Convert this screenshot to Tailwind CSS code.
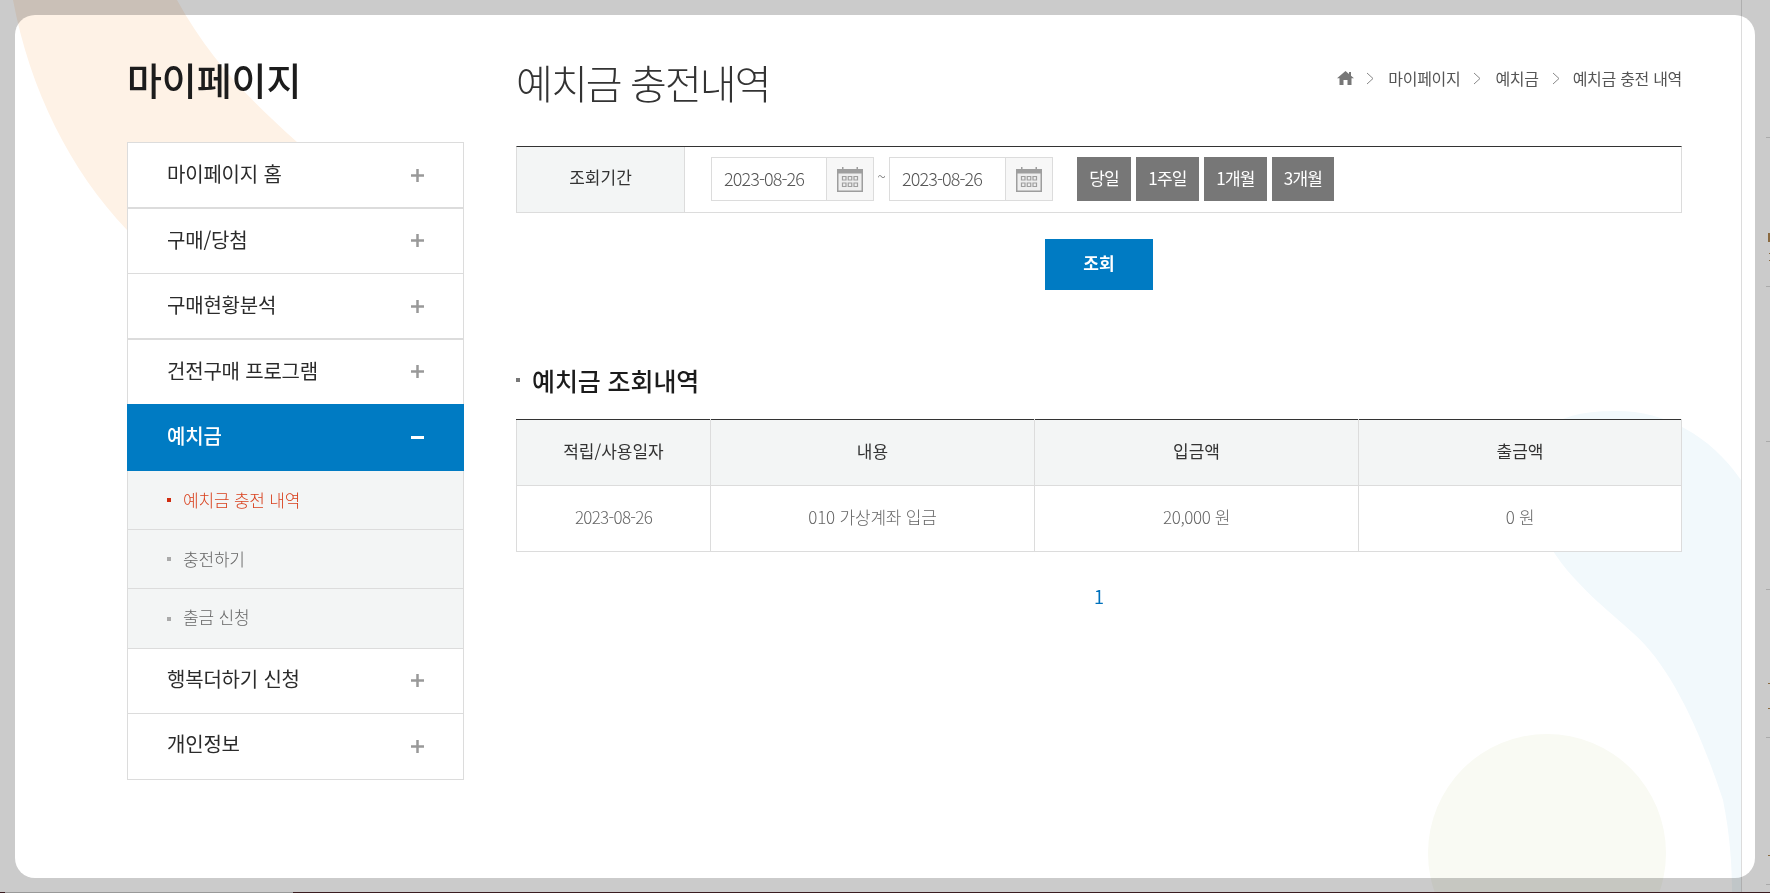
<!DOCTYPE html>
<html lang="ko">
<head>
  <meta charset="UTF-8">
  <title>예치금 충전내역</title>
  <script src="https://cdn.jsdelivr.net/npm/@tailwindcss/browser@4"></script>
</head>
<body class="bg-[#cbcbcb] h-[893px] overflow-hidden relative font-['Noto_Sans_CJK_KR','Noto_Sans',sans-serif]">
  <div class="absolute left-[15px] top-[15px] w-[1740px] h-[863px] bg-white rounded-[20px]"></div>

  <!-- background shapes -->
  <svg class="absolute left-0 top-0 mix-blend-multiply pointer-events-none" width="1770" height="893" viewBox="0 0 1770 893">
    <path d="M13 0 C30 90 70 170 127 230 L140 250 L320 160 L297 142 C250 100 210 60 177 0 Z" fill="#fef2e6"/>
    <path d="M1553 551 C1575 585 1610 612 1633 633 C1670 665 1700 730 1723 800 C1730 835 1732 865 1732 893 L1741 893 L1741 480 C1710 435 1665 411 1617 411 C1590 411 1575 414 1560 420 Z" fill="#f2f9fc"/>
    <circle cx="1547" cy="853" r="119" fill="#f9faf3"/>
    <path d="M1741 0h1v893h-1z" fill="#dcdcdc"/>
  </svg>
  <!-- bits of the page behind the overlay -->
  <svg class="absolute left-0 top-0 pointer-events-none" width="1770" height="893" viewBox="0 0 1770 893">
    <path d="M1766 137h4v1h-4zM1766 286h4v1h-4zM1766 441h4v1h-4zM1766 589h4v1h-4zM1766 737h4v1h-4zM1766 884h4v1h-4z" fill="#aaa"/>
    <path d="M1768 233h2v9h-2zM1769 253h1v1h-1zM1769 260h1v1h-1zM1768 683h2v1h-2zM1768 708h2v1h-2zM1768 855h2v1h-2z" fill="#8a6a40"/>
    <path d="M0 892h5v1H0zM293 892h1477v1H293z" fill="#3a1c20"/>
    <path d="M5 892h288v1H5z" fill="#999"/>
  </svg>

  <div class="absolute left-[127px] top-0 w-[1555px] flex gap-[52px]">
    <!-- side menu -->
    <aside class="w-[337px] pt-[51px]">
      <h2 class="text-[38px] leading-[56px] font-medium text-[#1c1c1c] tracking-[-0.1px]">마이페이지</h2>
      <ul class="mt-[35px] border border-[#dcdcdc] bg-white text-[20px] text-[#2b2b2b] tracking-[-0.2px]">
        <li class="h-[66px] flex items-center justify-between pl-[39px] pr-[39px] border-b-2 border-[#dcdcdc]"><span class="-mt-[2px]">마이페이지 홈</span><svg width="13" height="13" viewBox="0 0 13 13" fill="#999"><path d="M5.250 0h2.500v13h-2.500zM0 5.250h13v2.500H0z"/></svg></li>
        <li class="h-[65px] flex items-center justify-between pl-[39px] pr-[39px] border-b border-[#dcdcdc]"><span class="-mt-[3px]">구매/당첨</span><svg class="-mt-[1px]" width="13" height="13" viewBox="0 0 13 13" fill="#999"><path d="M5.250 0h2.500v13h-2.500zM0 5.250h13v2.500H0z"/></svg></li>
        <li class="h-[66px] flex items-center justify-between pl-[39px] pr-[39px] border-b-2 border-[#dcdcdc]"><span class="-mt-[2px]">구매현황분석</span><svg width="13" height="13" viewBox="0 0 13 13" fill="#999"><path d="M5.250 0h2.500v13h-2.500zM0 5.250h13v2.500H0z"/></svg></li>
        <li class="h-[64px] flex items-center justify-between pl-[39px] pr-[39px]"><span class="-mt-[3px]">건전구매 프로그램</span><svg class="-mt-[1px]" width="13" height="13" viewBox="0 0 13 13" fill="#999"><path d="M5.250 0h2.500v13h-2.500zM0 5.250h13v2.500H0z"/></svg></li>
        <li class="h-[67px] -mx-px flex items-center justify-between pl-[40px] pr-[40px] bg-[#007bc3] text-white font-medium"><span class="-mt-[3px]">예치금</span><span class="block w-[13px] h-[3px] bg-white"></span></li>
        <li class="h-[59px] flex items-center gap-[12px] pl-[39px] bg-[#f3f5f5] border-b border-[#dcdcdc] text-[17px] font-light text-[#d9411e]"><span class="w-1 h-1 bg-[#d02c10]"></span><span class="-mt-[1px]">예치금 충전 내역</span></li>
        <li class="h-[59px] flex items-center gap-[12px] pl-[39px] bg-[#f3f5f5] border-b border-[#dcdcdc] text-[17px] font-light text-[#666]"><span class="w-1 h-1 bg-[#aaa]"></span><span class="-mt-[1px]">충전하기</span></li>
        <li class="h-[60px] flex items-center gap-[12px] pl-[39px] bg-[#f3f5f5] border-b border-[#dcdcdc] text-[17px] font-light text-[#666]"><span class="w-1 h-1 bg-[#aaa]"></span><span class="-mt-[3px]">출금 신청</span></li>
        <li class="h-[65px] flex items-center justify-between pl-[39px] pr-[39px] border-b border-[#dcdcdc]"><span class="-mt-[4px]">행복더하기 신청</span><svg class="-mt-[1px]" width="13" height="13" viewBox="0 0 13 13" fill="#999"><path d="M5.250 0h2.500v13h-2.500zM0 5.250h13v2.500H0z"/></svg></li>
        <li class="h-[65px] flex items-center justify-between pl-[39px] pr-[39px]"><span class="-mt-[5px]">개인정보</span><svg width="13" height="13" viewBox="0 0 13 13" fill="#999"><path d="M5.250 0h2.500v13h-2.500zM0 5.250h13v2.500H0z"/></svg></li>
      </ul>
    </aside>

    <!-- content -->
    <main class="w-[1166px] pt-[53px]">
      <div class="flex items-start justify-between h-[93px]">
        <h1 class="text-[40px] leading-[58px] font-light text-[#333] tracking-[-1.9px]">예치금 충전내역</h1>
        <div class="flex items-center text-[16px] text-[#555] tracking-[-0.3px] mt-[13px]">
          <svg width="17" height="14" viewBox="0 0 17 14" fill="#777"><path d="M8.500 0 L12 3 V1 H14 V4.700 L17 7.300 H14.500 V14 H10.500 V9 H6.500 V14 H2.500 V7.300 H0 Z"/></svg>
          <svg class="ml-[12px] mr-[14px]" width="8" height="13" viewBox="0 0 8 13" fill="none" stroke="#888"><path d="M1 1l6 5.500L1 12"/></svg>
          <span>마이페이지</span>
          <svg class="ml-[13px] mr-[14px]" width="8" height="13" viewBox="0 0 8 13" fill="none" stroke="#888"><path d="M1 1l6 5.500L1 12"/></svg>
          <span>예치금</span>
          <svg class="ml-[13px] mr-[13px]" width="8" height="13" viewBox="0 0 8 13" fill="none" stroke="#888"><path d="M1 1l6 5.500L1 12"/></svg>
          <span>예치금 충전 내역</span>
        </div>
      </div>

      <div class="h-[67px] flex border border-[#dcdcdc] border-t-[#333] bg-white">
        <div class="w-[168px] bg-[#f3f5f5] border-r border-[#dcdcdc] flex items-center justify-center text-[17px] text-[#333] pb-[5px]">조회기간</div>
        <div class="flex items-start pt-[10px] pl-[26px]">
          <div class="flex h-[44px] w-[163px] border border-[#dcdcdc] bg-white">
            <span class="flex-1 pl-[12px] text-[18px] leading-[40px] font-light text-[#555] tracking-[-0.9px]">2023-08-26</span>
            <span class="w-[47px] border-l border-[#dcdcdc] bg-[#f7f7f7] flex items-center justify-center">
              <svg width="26" height="25" viewBox="0 0 26 25"><path d="M5 0h1.500v3H5zM19.500 0H21v3h-1.500z" fill="#9e9e9e"/><rect x="0.750" y="2.750" width="24.500" height="21.500" fill="#eee" stroke="#9e9e9e" stroke-width="1.500"/><path d="M0 2h26v4.500H0z" fill="#9e9e9e"/><path d="M5.500 9.500h3.500v3.500H5.500zM11.250 9.500h3.500v3.500h-3.500zM17 9.500h3.500v3.500H17zM5.500 16h3.500v3.500H5.500zM11.250 16h3.500v3.500h-3.500zM17 16h3.500v3.500H17z" fill="none" stroke="#9e9e9e" stroke-width="1.200"/></svg>
            </span>
          </div>
          <span class="w-[15px] text-center text-[16px] font-light leading-[38px] text-[#777]">~</span>
          <div class="flex h-[44px] w-[164px] border border-[#dcdcdc] bg-white">
            <span class="flex-1 pl-[12px] text-[18px] leading-[40px] font-light text-[#555] tracking-[-0.9px]">2023-08-26</span>
            <span class="w-[47px] border-l border-[#dcdcdc] bg-[#f7f7f7] flex items-center justify-center">
              <svg width="26" height="25" viewBox="0 0 26 25"><path d="M5 0h1.500v3H5zM19.500 0H21v3h-1.500z" fill="#9e9e9e"/><rect x="0.750" y="2.750" width="24.500" height="21.500" fill="#eee" stroke="#9e9e9e" stroke-width="1.500"/><path d="M0 2h26v4.500H0z" fill="#9e9e9e"/><path d="M5.500 9.500h3.500v3.500H5.500zM11.250 9.500h3.500v3.500h-3.500zM17 9.500h3.500v3.500H17zM5.500 16h3.500v3.500H5.500zM11.250 16h3.500v3.500h-3.500zM17 16h3.500v3.500H17z" fill="none" stroke="#9e9e9e" stroke-width="1.200"/></svg>
            </span>
          </div>
          <div class="flex gap-[5px] ml-[24px] text-[17px] text-white tracking-[-0.8px]">
            <span class="w-[54px] h-[44px] bg-[#777] flex items-center justify-center pb-[2px]">당일</span>
            <span class="w-[63px] h-[44px] bg-[#777] flex items-center justify-center pb-[2px]">1주일</span>
            <span class="w-[63px] h-[44px] bg-[#777] flex items-center justify-center pb-[2px]">1개월</span>
            <span class="w-[62px] h-[44px] bg-[#777] flex items-center justify-center pb-[2px]">3개월</span>
          </div>
        </div>
      </div>

      <div class="flex justify-center mt-[26px]">
        <span class="w-[108px] h-[51px] bg-[#007bc3] text-white text-[17px] font-bold flex items-center justify-center pb-[4px]">조회</span>
      </div>

      <h3 class="mt-[72px] flex items-center text-[25px] leading-[36px] font-medium text-[#1c1c1c] tracking-[-0.1px]"><span class="w-[4px] h-[4px] bg-[#777] mr-[12px]"></span>예치금 조회내역</h3>

      <table class="mt-[21px] w-full table-fixed border-collapse bg-white text-[17px] text-center">
        <thead>
          <tr class="h-[66px] bg-[#f3f5f5] text-[#333]">
            <th class="w-[194px] font-normal border border-[#dcdcdc] border-t-[#333] pb-[4px]">적립/사용일자</th>
            <th class="w-[324px] font-normal border border-[#dcdcdc] border-t-[#333] pb-[4px]">내용</th>
            <th class="w-[324px] font-normal border border-[#dcdcdc] border-t-[#333] pb-[4px]">입금액</th>
            <th class="font-normal border border-[#dcdcdc] border-t-[#333] pb-[4px]">출금액</th>
          </tr>
        </thead>
        <tbody>
          <tr class="h-[66px] text-[#666] font-light tracking-[-0.4px]">
            <td class="border border-[#dcdcdc] pb-[4px] tracking-[-0.7px]">2023-08-26</td>
            <td class="border border-[#dcdcdc] pb-[4px] tracking-[-0.2px]">010 가상계좌 입금</td>
            <td class="border border-[#dcdcdc] pb-[4px]">20,000 원</td>
            <td class="border border-[#dcdcdc] pb-[4px]">0 원</td>
          </tr>
        </tbody>
      </table>

      <div class="mt-[32px] text-center text-[18px] leading-[24px] text-[#0071bc]">1</div>
    </main>
  </div>
</body>
</html>
